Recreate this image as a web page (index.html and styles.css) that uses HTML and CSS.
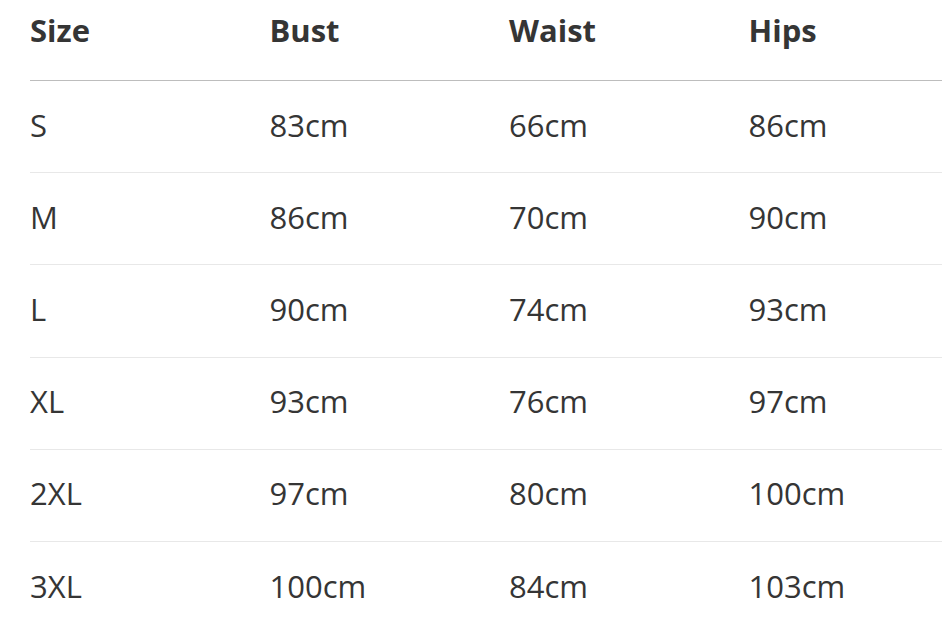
FILE: index.html
```html
<!DOCTYPE html>
<html>
<head>
<meta charset="utf-8">
<link rel="stylesheet" href="styles.css">
</head>
<body>
<div class="table">
  <div class="row head">
    <div>Size</div><div>Bust</div><div>Waist</div><div>Hips</div>
  </div>
  <div class="row"><div>S</div><div>83cm</div><div>66cm</div><div>86cm</div></div>
  <div class="row"><div>M</div><div>86cm</div><div>70cm</div><div>90cm</div></div>
  <div class="row"><div>L</div><div>90cm</div><div>74cm</div><div>93cm</div></div>
  <div class="row"><div>XL</div><div>93cm</div><div>76cm</div><div>97cm</div></div>
  <div class="row"><div>2XL</div><div>97cm</div><div>80cm</div><div>100cm</div></div>
  <div class="row last"><div>3XL</div><div>100cm</div><div>84cm</div><div>103cm</div></div>
</div>
</body>
</html>
```
FILE: styles.css
```css
html, body {
  margin: 0;
  padding: 0;
  background: #ffffff;
  overflow: hidden;
}
body {
  font-family: "Open Sans", "Liberation Sans", sans-serif;
  font-size: 31px;
  line-height: 42px;
  color: #353535;
}
.table {
  margin-left: 30px;
  width: 912px;
}
.row {
  display: grid;
  grid-template-columns: 239.5px 239.5px 239.5px 1fr;
  align-items: center;
  height: 92.2px;
  box-sizing: border-box;
  padding-bottom: 4px;
  border-bottom: 1px solid #e8e8e8;
}
.row.head {
  height: 81px;
  align-items: start;
  padding-top: 9px;
  padding-bottom: 0;
  font-weight: 700;
  border-bottom: 1px solid #bdbdbd;
}
.row.last {
  border-bottom: none;
}
```
